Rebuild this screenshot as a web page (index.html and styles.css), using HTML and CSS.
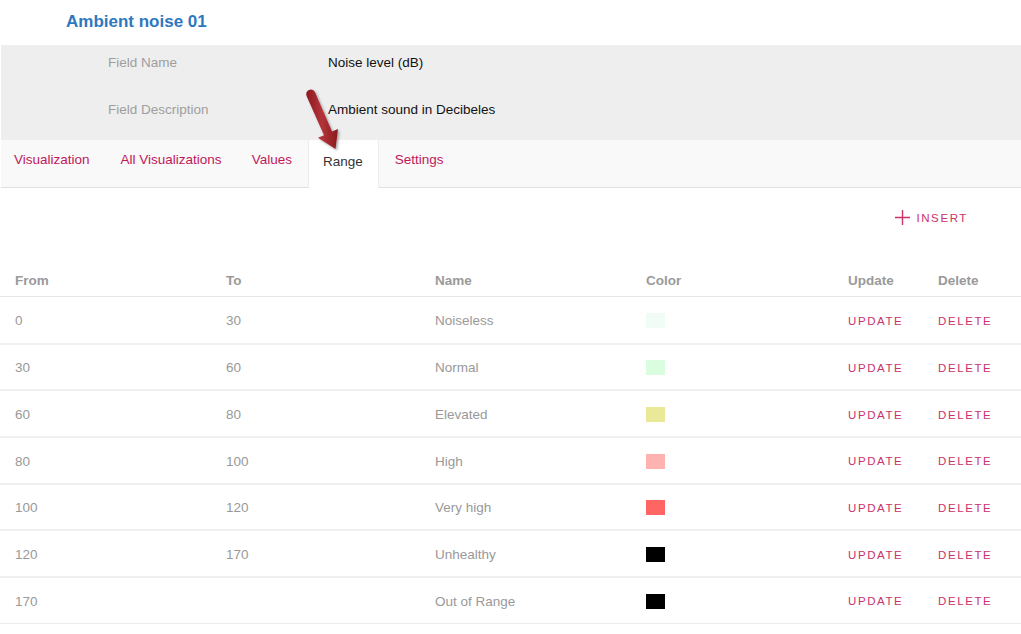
FILE: index.html
```html
<!DOCTYPE html>
<html>
<head>
<meta charset="utf-8">
<link rel="stylesheet" href="styles.css">
</head>
<body>
<div class="page">
  <h1 class="title">Ambient noise 01</h1>
  <div class="info">
    <div class="info-row"><span class="info-label">Field Name</span><span class="info-value">Noise level (dB)</span></div>
    <div class="info-row"><span class="info-label">Field Description</span><span class="info-value">Ambient sound in Decibeles</span></div>
  </div>
  <div class="tabs">
    <a class="tab">Visualization</a>
    <a class="tab">All Visualizations</a>
    <a class="tab">Values</a>
    <a class="tab active">Range</a>
    <a class="tab">Settings</a>
  </div>
  <div class="toolbar">
    <button class="insert"><svg width="17" height="17" viewBox="0 0 17 17"><path d="M8.5 1v15M1 8.5h15" stroke="#c9326a" stroke-width="1.4" fill="none"/></svg><span>INSERT</span></button>
  </div>
  <div class="table">
    <div class="row head">
      <div>From</div><div>To</div><div>Name</div><div>Color</div><div>Update</div><div>Delete</div>
    </div>
    <div class="row"><div>0</div><div>30</div><div>Noiseless</div><div><span class="sw" style="background:#f1fcf6"></span></div><div class="act">UPDATE</div><div class="act">DELETE</div></div>
    <div class="row"><div>30</div><div>60</div><div>Normal</div><div><span class="sw" style="background:#dbfddf"></span></div><div class="act">UPDATE</div><div class="act">DELETE</div></div>
    <div class="row"><div>60</div><div>80</div><div>Elevated</div><div><span class="sw" style="background:#e9e999"></span></div><div class="act">UPDATE</div><div class="act">DELETE</div></div>
    <div class="row"><div>80</div><div>100</div><div>High</div><div><span class="sw" style="background:#ffb3b1"></span></div><div class="act">UPDATE</div><div class="act">DELETE</div></div>
    <div class="row"><div>100</div><div>120</div><div>Very high</div><div><span class="sw" style="background:#ff6663"></span></div><div class="act">UPDATE</div><div class="act">DELETE</div></div>
    <div class="row"><div>120</div><div>170</div><div>Unhealthy</div><div><span class="sw" style="background:#000000"></span></div><div class="act">UPDATE</div><div class="act">DELETE</div></div>
    <div class="row"><div>170</div><div></div><div>Out of Range</div><div><span class="sw" style="background:#000000"></span></div><div class="act">UPDATE</div><div class="act">DELETE</div></div>
  </div>
  <svg class="arrow" width="60" height="80" viewBox="0 0 60 80">
    <defs>
      <filter id="sh" x="-30%" y="-30%" width="160%" height="160%"><feDropShadow dx="1.5" dy="1.5" stdDeviation="1.2" flood-color="#000" flood-opacity="0.35"/></filter>
      <linearGradient id="g" x1="0" y1="0" x2="1" y2="0"><stop offset="0" stop-color="#8e1b1f"/><stop offset="0.5" stop-color="#b2343a"/><stop offset="1" stop-color="#8a1a1e"/></linearGradient>
    </defs>
    <path filter="url(#sh)" fill="url(#g)" d="M5.6 10 A4.5 4.5 0 0 1 14 6.2 L31 45.5 L37 43 L34.5 63 L17 51.8 L23 49.3 Z"/>
  </svg>
</div>
</body>
</html>
```

FILE: styles.css
```css
html, body { margin: 0; padding: 0; background: #fff; }
body { font-family: "Liberation Sans", Arial, sans-serif; }
.page { position: relative; width: 1021px; height: 634px; overflow: hidden; }
.title { margin: 0; padding: 12px 0 0 66px; height: 45px; box-sizing: border-box; font-size: 17px; font-weight: bold; color: #2e78c0; line-height: 20px; }
.info { margin-left: 1px; background: #eeeeee; padding: 7px 0 0 0; height: 95px; box-sizing: border-box; }
.info-row { display: flex; height: 47px; align-items: flex-start; font-size: 13.5px; line-height: 18px; padding-top: 2px; box-sizing: border-box; }
.info-label { width: 220px; padding-left: 107px; color: #9e9e9e; }
.info-value { color: #111; }
.tabs { display: flex; margin-left: 1px; height: 47px; background: #f9f9f9; border-bottom: 1px solid #e0e0e0; border-top-left-radius: 3px; }
.tab { display: block; padding: 0 15px; margin-right: 1px; line-height: 39px; height: 47px; box-sizing: border-box; font-size: 13.5px; color: #c0185b; }
.tab:first-child { padding-left: 13px; }
.tab:nth-child(2) { padding-right: 14px; }
.tab.active { background: #fff; color: #333; padding: 2px 15px 0 14px; margin-bottom: -1px; height: 48px; border-left: 1px solid #ececec; border-right: 1px solid #ececec; }
.toolbar { display: flex; justify-content: flex-end; padding: 21px 53px 0 0; height: 75px; box-sizing: border-box; }
.insert { display: flex; align-items: center; gap: 5px; background: none; border: 0; padding: 0; height: 17px; font-family: inherit; font-size: 11.5px; letter-spacing: 1.6px; color: #c9326a; }
.table { border-bottom: 1px solid #ececec; }
.row { display: grid; grid-template-columns: 211px 209px 211px 202px 90px 1fr; padding: 2px 0 0 15px; height: 46.67px; align-items: center; font-size: 13.5px; color: #999; border-top: 2px solid #f0f0f0; box-sizing: border-box; }
.row.head { border-top: 0; height: 33px; padding-top: 1px; font-weight: bold; color: #9a9a9a; }
.row:nth-child(2) { border-top: 1px solid #e6e6e6; }
.sw { display: block; width: 19px; height: 15px; }
.act { color: #c9326a; font-size: 11.5px; letter-spacing: 1.6px; }
.arrow { position: absolute; left: 301px; top: 86px; }
```
